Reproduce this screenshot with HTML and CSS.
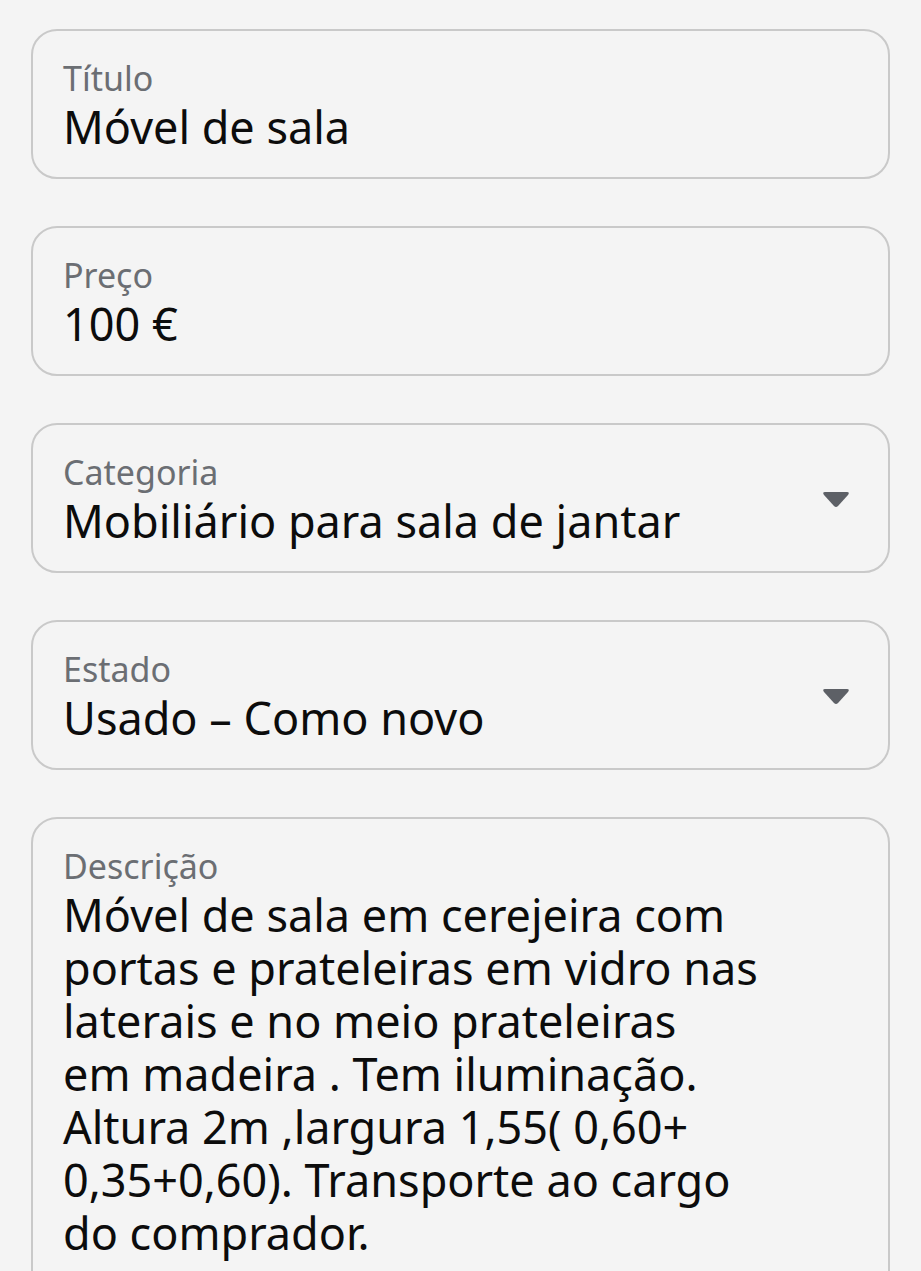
FILE: index.html
```html
<!DOCTYPE html>
<html lang="pt">

<head>
  <meta charset="UTF-8">
  <meta name="viewport" content="width=device-width, initial-scale=1.0">
  <title>Anúncio</title>
  <link rel="stylesheet" href="styles.css">
</head>

<body>
  <div class="form">
    <div class="field">
      <div class="field-label">Título</div>
      <div class="field-value">Móvel de sala</div>
    </div>

    <div class="field">
      <div class="field-label">Preço</div>
      <div class="field-value">100 €</div>
    </div>

    <div class="field field-select">
      <div class="field-text">
        <div class="field-label">Categoria</div>
        <div class="field-value">Mobiliário para sala de jantar</div>
      </div>
      <svg class="arrow" viewBox="0 0 28 17" width="28" height="17">
        <path d="M3 1 H25 Q28 1 26 4 L16 15 Q14 17 12 15 L2 4 Q0 1 3 1 Z" fill="#5d6066" />
      </svg>
    </div>

    <div class="field field-select">
      <div class="field-text">
        <div class="field-label">Estado</div>
        <div class="field-value">Usado – Como novo</div>
      </div>
      <svg class="arrow" viewBox="0 0 28 17" width="28" height="17">
        <path d="M3 1 H25 Q28 1 26 4 L16 15 Q14 17 12 15 L2 4 Q0 1 3 1 Z" fill="#5d6066" />
      </svg>
    </div>

    <div class="field field-description">
      <div class="field-label">Descrição</div>
      <div class="field-value">Móvel de sala em cerejeira com<br>portas e prateleiras em vidro nas<br>laterais e no meio prateleiras<br>em madeira . Tem iluminação.<br>Altura 2m ,largura 1,55( 0,60+<br>0,35+0,60). Transporte ao cargo<br>do comprador.</div>
    </div>
  </div>
</body>

</html>
```

FILE: styles.css
```css
body {
  font-family: "Noto Sans", Roboto, sans-serif;
  margin: 0;
  padding: 0;
  background-color: #f4f4f4;
  overflow: hidden;
}

.form {
  display: flex;
  flex-direction: column;
  gap: 47px;
  padding: 29px 31px 0 31px;
}

.field {
  border: 2px solid #c9c9c9;
  border-radius: 26px;
  padding: 26px 32px 24px 30px;
}

.field-label {
  font-size: 34px;
  line-height: 43px;
  color: #6b6e73;
}

.field-value {
  font-size: 45px;
  line-height: 53px;
  color: #0c0c0c;
}

.field-select {
  display: flex;
  align-items: center;
  justify-content: space-between;
  padding-right: 38px;
}

.arrow {
  flex-shrink: 0;
}

.field-description {
  padding-bottom: 40px;
}
```
